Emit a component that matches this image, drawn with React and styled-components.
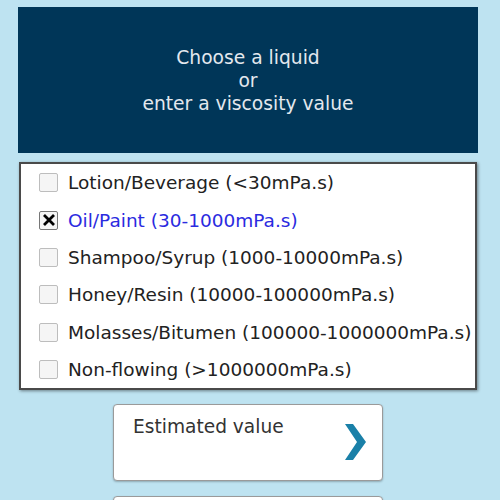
import React, { useState } from 'react';
import styled, { createGlobalStyle } from 'styled-components';

const GlobalStyle = createGlobalStyle`
  html, body {
    margin: 0;
    padding: 0;
    background: #bee3f1;
    font-family: "DejaVu Sans", "Liberation Sans", sans-serif;
  }
`;

const Page = styled.main`
  width: 500px;
  height: 500px;
  overflow: hidden;
  box-sizing: border-box;
  padding: 7px 22px 0 18px;
  display: flex;
  flex-direction: column;
  align-items: stretch;

  & > * {
    flex-shrink: 0;
  }
`;

const Header = styled.header`
  height: 146px;
  background: #003658;
  color: #e3e8ee;
  display: flex;
  align-items: center;
  justify-content: center;
  text-align: center;
  font-size: 18.7px;
  line-height: 23px;
`;

const List = styled.ul`
  list-style: none;
  margin: 9px 1px 0 1px;
  padding: 0;
  background: #fff;
  border: 2px solid #4a4a4a;
  box-shadow: 1px 1px 3px rgba(0, 0, 0, 0.45);
`;

const Item = styled.li`
  height: 37.35px;
  display: flex;
  align-items: center;
  padding-left: 18px;
  gap: 10px;
  font-size: 18.5px;
  white-space: nowrap;
  color: ${props => (props.$active ? '#2b2be0' : '#222')};
  cursor: pointer;
`;

const Box = styled.span`
  width: 19px;
  height: 19px;
  flex-shrink: 0;
  box-sizing: border-box;
  border: 1px solid ${props => (props.$checked ? '#777' : '#bdbdbd')};
  border-radius: 2px;
  background: #f5f5f5;
  display: flex;
  align-items: center;
  justify-content: center;
`;

const Actions = styled.div`
  display: flex;
  flex-direction: column;
  align-items: center;
  gap: 15px;
  margin-top: 14px;
`;

const Card = styled.button`
  width: 270px;
  height: 77px;
  flex-shrink: 0;
  box-sizing: border-box;
  background: #fff;
  border: 1px solid #9a9a9a;
  border-radius: 4px;
  box-shadow: 0 1px 2px rgba(0, 0, 0, 0.25);
  display: flex;
  justify-content: space-between;
  align-items: flex-start;
  padding: 11px 16px 0 19px;
  font-family: inherit;
  font-size: 18.6px;
  color: #333;
  text-align: left;
`;

const Chevron = styled.svg`
  margin-top: 8px;
`;

const liquids = [
  'Lotion/Beverage (<30mPa.s)',
  'Oil/Paint (30-1000mPa.s)',
  'Shampoo/Syrup (1000-10000mPa.s)',
  'Honey/Resin (10000-100000mPa.s)',
  'Molasses/Bitumen (100000-1000000mPa.s)',
  'Non-flowing (>1000000mPa.s)',
];

export default function App() {
  const [selected, setSelected] = useState(1);

  return (
    <>
      <GlobalStyle />
      <Page>
        <Header>
          <div>
            Choose a liquid
            <br />
            or
            <br />
            enter a viscosity value
          </div>
        </Header>

        <List>
          {liquids.map((label, i) => (
            <Item key={label} $active={i === selected} onClick={() => setSelected(i)}>
              <Box $checked={i === selected}>
                {i === selected && (
                  <svg width="14" height="14" viewBox="0 0 14 14">
                    <path d="M2 2 L12 12 M12 2 L2 12" stroke="#000" strokeWidth="2.8" />
                  </svg>
                )}
              </Box>
              {label}
            </Item>
          ))}
        </List>

        <Actions>
          <Card>
            Estimated value
            <Chevron width="21" height="36" viewBox="0 0 21 36">
              <path d="M0 0 H8 L21 18 L8 36 H0 L12 18 Z" fill="#1a80a8" />
            </Chevron>
          </Card>
          <Card />
        </Actions>
      </Page>
    </>
  );
}
